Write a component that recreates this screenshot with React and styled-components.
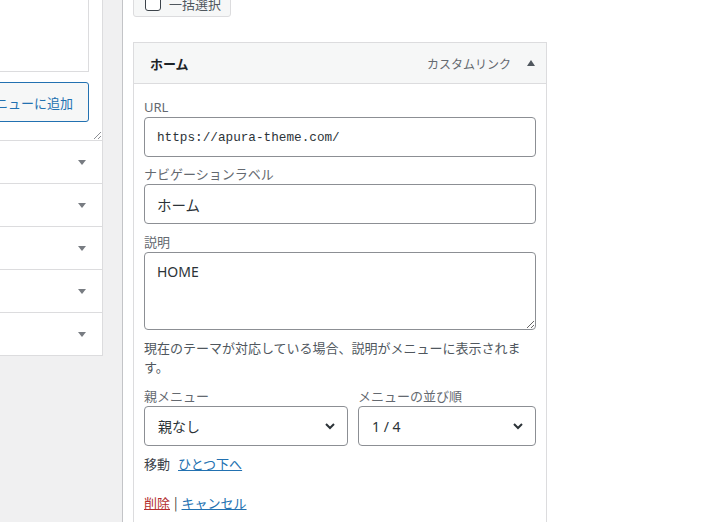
import React from "react";
import styled, { createGlobalStyle } from "styled-components";

const GlobalStyle = createGlobalStyle`
  html, body {
    margin: 0;
    padding: 0;
    background: #f0f0f1;
    overflow: hidden;
  }
  body {
    font-family: "Segoe UI", "Noto Sans", "Noto Sans CJK JP", sans-serif;
    color: #3c434a;
    font-size: 13px;
  }
  * { box-sizing: border-box; }
`;

const Page = styled.div`
  display: flex;
  align-items: flex-start;
  height: 522px;
  width: 724px;
`;

const LeftPanel = styled.div`
  width: 103px;
  flex: none;
  background: #fff;
  border-right: 1px solid #dcdcde;
  border-bottom: 1px solid #dcdcde;
  overflow: hidden;
  display: flex;
  flex-direction: column;
  align-items: flex-end;
`;

const LeftTop = styled.div`
  position: relative;
  width: 260px;
  height: 140px;
  padding-right: 13px;
  display: flex;
  flex-direction: column;
  align-items: flex-end;
`;

const ListBox = styled.div`
  width: 220px;
  height: 72px;
  background: #fff;
  border: 1px solid #dcdcde;
  border-top: none;
`;

const AddButton = styled.div`
  margin-top: 10px;
  height: 40px;
  padding: 0 15px;
  display: flex;
  align-items: center;
  border: 1px solid #2271b1;
  border-radius: 3px;
  background: #f6f7f7;
  color: #2271b1;
  font-size: 13px;
  line-height: 1;
  white-space: nowrap;
  font-family: "Noto Sans CJK JP", sans-serif;
`;

const Grip = styled.svg`
  position: absolute;
  right: 1px;
  bottom: 1px;
`;

const AccRow = styled.div`
  width: 260px;
  height: 43px;
  border-top: 1px solid #dcdcde;
  display: flex;
  align-items: center;
  justify-content: flex-end;
  padding-right: 16px;
`;

const Gutter = styled.div`
  width: 19px;
  flex: none;
`;

const Main = styled.div`
  flex: 1;
  height: 100%;
  background: #fff;
  border-left: 1px solid #c3c4c7;
  padding: 0 10px;
`;

const Toolbar = styled.div`
  height: 17px;
  overflow: hidden;
  display: flex;
  align-items: flex-end;
`;

const BulkButton = styled.div`
  height: 31px;
  width: 98px;
  display: flex;
  align-items: center;
  gap: 8px;
  padding: 3px 11px 0;
  background: #f6f7f7;
  border: 1px solid #dcdcde;
  border-radius: 3px;
  font-size: 13px;
  color: #50575e;
  font-family: "Noto Sans CJK JP", sans-serif;
  white-space: nowrap;
`;

const CheckBox = styled.span`
  width: 16px;
  height: 16px;
  flex: none;
  border: 1px solid #3c434a;
  border-radius: 3px;
  background: #fff;
`;

const Card = styled.div`
  margin-top: 25px;
  width: 414px;
  border: 1px solid #dcdcde;
  background: #fff;
`;

const CardHeader = styled.div`
  height: 41px;
  background: #f6f7f7;
  border-bottom: 1px solid #dcdcde;
  display: flex;
  align-items: center;
  padding: 0 11px 0 16px;
`;

const ItemTitle = styled.span`
  font-family: "Noto Sans CJK JP", sans-serif;
  font-weight: 700;
  font-size: 13px;
  color: #1d2327;
  flex: 1;
`;

const ItemType = styled.span`
  font-family: "Noto Sans CJK JP", sans-serif;
  font-size: 12px;
  color: #646970;
  margin-right: 16px;
`;

const CardBody = styled.div`
  padding: 14px 10px 20px;
  display: flex;
  flex-direction: column;
`;

const Label = styled.label`
  display: block;
  font-size: 13px;
  line-height: 19px;
  height: 19px;
  color: #646970;
  margin-top: ${(p) => p.$top || 0}px;
  font-family: "Segoe UI", "Noto Sans", "Noto Sans CJK JP", sans-serif;
`;

const TextInput = styled.input`
  display: block;
  width: 100%;
  height: 40px;
  border: 1px solid #8c8f94;
  border-radius: 4px;
  padding: 0 12px;
  margin: 0;
  background: #fff;
  color: #2c3338;
  outline: none;
  font-size: ${(p) => (p.$mono ? "12.7px" : "14.5px")};
  font-family: ${(p) =>
    p.$mono
      ? '"Liberation Mono", "DejaVu Sans Mono", monospace'
      : '"Segoe UI", "Noto Sans", "Noto Sans CJK JP", sans-serif'};
`;

const TextArea = styled.textarea`
  display: block;
  width: 100%;
  height: 78px;
  border: 1px solid #8c8f94;
  border-radius: 4px;
  padding: 9px 12px;
  margin: 0;
  resize: vertical;
  background: #fff;
  color: #2c3338;
  outline: none;
  font-size: 14px;
  line-height: 20px;
  font-family: "Segoe UI", "Noto Sans", "Noto Sans CJK JP", sans-serif;
`;

const Help = styled.p`
  margin: 8px 0 0;
  font-size: 13px;
  line-height: 19px;
  color: #50575e;
  font-family: "Noto Sans CJK JP", sans-serif;
`;

const SelectRow = styled.div`
  display: grid;
  grid-template-columns: 204px 1fr;
  column-gap: 10px;
  margin-top: 11px;
`;

const SelectBox = styled.div`
  height: 40px;
  border: 1px solid #8c8f94;
  border-radius: 4px;
  display: flex;
  align-items: center;
  justify-content: space-between;
  padding: 0 10px 0 13px;
  font-size: 14px;
  color: #2c3338;
  background: #fff;
  font-family: "Segoe UI", "Noto Sans", "Noto Sans CJK JP", sans-serif;
`;

const MoveRow = styled.div`
  margin-top: 8px;
  font-size: 13px;
  line-height: 19px;
  color: #3c434a;
  display: flex;
  gap: 8px;
  font-family: "Noto Sans CJK JP", sans-serif;
`;

const ActionRow = styled.div`
  margin-top: 20px;
  font-size: 13px;
  line-height: 19px;
  color: #2c3338;
  display: flex;
  gap: 4px;
  font-family: "Noto Sans CJK JP", sans-serif;
`;

const Link = styled.a`
  color: ${(p) => (p.$danger ? "#b32d2e" : "#2271b1")};
  text-decoration: underline;
  cursor: pointer;
`;

const Chevron = () => (
  <svg width="14" height="14" viewBox="0 0 14 14">
    <polyline points="3,5 7,9 11,5" fill="none" stroke="#2c3338" strokeWidth="2" />
  </svg>
);

const DownTri = () => (
  <svg width="8" height="5" viewBox="0 0 8 5">
    <polygon points="0,0 8,0 4,5" fill="#787c82" />
  </svg>
);

const UpTri = () => (
  <svg width="8" height="6" viewBox="0 0 8 6">
    <polygon points="0,6 8,6 4,0" fill="#50575e" />
  </svg>
);

export default function App() {
  return (
    <>
      <GlobalStyle />
      <Page>
        <LeftPanel>
          <LeftTop>
            <ListBox />
            <AddButton>メニューに追加</AddButton>
            <Grip width="8" height="8" viewBox="0 0 8 8">
              <line x1="1" y1="8" x2="8" y2="1" stroke="#8c8f94" strokeWidth="1" />
              <line x1="5" y1="8" x2="8" y2="5" stroke="#8c8f94" strokeWidth="1" />
            </Grip>
          </LeftTop>
          {[0, 1, 2, 3, 4].map((i) => (
            <AccRow key={i}>
              <DownTri />
            </AccRow>
          ))}
        </LeftPanel>
        <Gutter />
        <Main>
          <Toolbar>
            <BulkButton>
              <CheckBox />
              一括選択
            </BulkButton>
          </Toolbar>
          <Card>
            <CardHeader>
              <ItemTitle>ホーム</ItemTitle>
              <ItemType>カスタムリンク</ItemType>
              <UpTri />
            </CardHeader>
            <CardBody>
              <Label>URL</Label>
              <TextInput $mono readOnly value="https://apura-theme.com/" />
              <Label $top={8}>ナビゲーションラベル</Label>
              <TextInput readOnly value="ホーム" />
              <Label $top={9}>説明</Label>
              <TextArea readOnly value="HOME" />
              <Help>現在のテーマが対応している場合、説明がメニューに表示されます。</Help>
              <SelectRow>
                <Label>親メニュー</Label>
                <Label>メニューの並び順</Label>
                <SelectBox>
                  <span>親なし</span>
                  <Chevron />
                </SelectBox>
                <SelectBox>
                  <span>1 / 4</span>
                  <Chevron />
                </SelectBox>
              </SelectRow>
              <MoveRow>
                <span>移動</span>
                <Link>ひとつ下へ</Link>
              </MoveRow>
              <ActionRow>
                <Link $danger>削除</Link>
                <span>|</span>
                <Link>キャンセル</Link>
              </ActionRow>
            </CardBody>
          </Card>
        </Main>
      </Page>
    </>
  );
}
